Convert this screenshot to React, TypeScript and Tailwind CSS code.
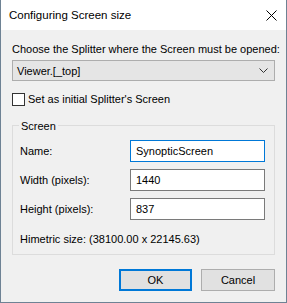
import React from 'react';

const font = { fontFamily: '"Liberation Sans", Arial, sans-serif' };

const Field: React.FC<{ label: string; value: string; focused?: boolean }> = ({ label, value, focused }) => (
  <div className="flex items-center h-[22px]">
    <span className="w-[110px]">{label}</span>
    <div
      className={`w-[135px] h-[22px] bg-white flex items-center px-[5px] border ${
        focused ? 'border-[#0078d7]' : 'border-[#7a7a7a]'
      }`}
    >
      {value}
    </div>
  </div>
);

export default function App() {
  return (
    <div
      className="w-[287px] h-[303px] bg-[#f0f0f0] border-x border-b border-[#6e8294] flex flex-col text-[11px] leading-[16px] text-black"
      style={font}
    >
      {/* title bar */}
      <div className="h-[30px] bg-white flex items-center justify-between pl-[8px] pr-[9px]">
        <span className="text-[11.5px]">Configuring Screen size</span>
        <svg width="11" height="11" viewBox="0 0 11 11" className="mt-[1px]">
          <path d="M0.5 0.5 L10.5 10.5 M10.5 0.5 L0.5 10.5" stroke="#000" strokeWidth="1" />
        </svg>
      </div>

      <div className="flex flex-col px-[11px]">
        <div className="mt-[11px] whitespace-nowrap">Choose the Splitter where the Screen must be opened:</div>

        <div className="mt-[3px] h-[21px] border border-[#adadad] bg-[#e5e5e5] flex items-center justify-between pl-[4px] pr-[6px]">
          <span>Viewer.[_top]</span>
          <svg width="9" height="5" viewBox="0 0 9 5">
            <path d="M0.5 0.5 L4.5 4.5 L8.5 0.5" stroke="#333" fill="none" strokeWidth="1" />
          </svg>
        </div>

        <label className="mt-[10px] flex items-center gap-[3px]">
          <span className="w-[13px] h-[13px] border border-[#333] bg-white" />
          <span>Set as initial Splitter's Screen</span>
        </label>

        {/* group box */}
        <div className="relative mt-[18px] h-[130px] border border-[#dcdcdc] flex flex-col pl-[7px] pt-[14px]">
          <span className="absolute -top-[8px] left-[6px] bg-[#f0f0f0] px-[2px]">Screen</span>
          <div className="flex flex-col gap-[7px]">
            <Field label="Name:" value="SynopticScreen" focused />
            <Field label="Width (pixels):" value="1440" />
            <Field label="Height (pixels):" value="837" />
          </div>
          <div className="mt-[11px]">Himetric size: (38100.00 x 22145.63)</div>
        </div>

        <div className="mt-[14px] flex justify-end gap-[9px]">
          <button className="w-[73px] h-[22px] bg-[#e1e1e1] border-2 border-[#0078d7] flex items-center justify-center">
            OK
          </button>
          <button className="w-[74px] h-[22px] bg-[#e1e1e1] border border-[#adadad] flex items-center justify-center">
            Cancel
          </button>
        </div>
      </div>
    </div>
  );
}
